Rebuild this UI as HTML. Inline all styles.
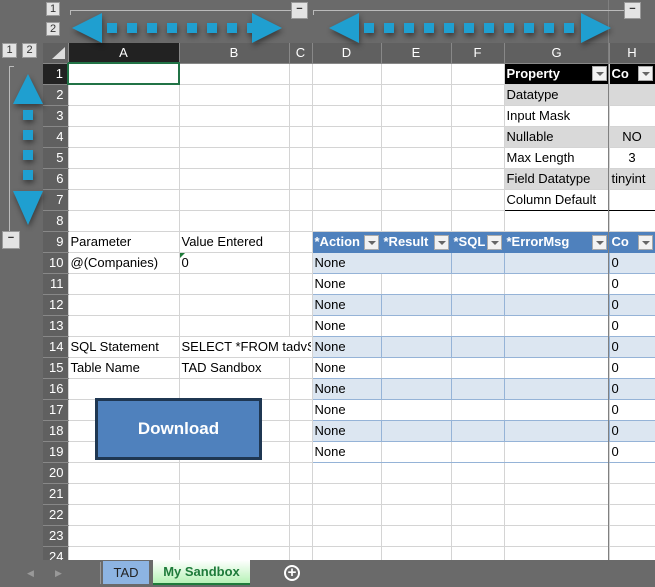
<!DOCTYPE html>
<html><head><meta charset="utf-8"><style>
*{margin:0;padding:0;box-sizing:border-box}
body{width:655px;height:587px;overflow:hidden;background:#6a6a6a;font-family:"Liberation Sans",Arial,sans-serif;position:relative}
.a{position:absolute}
table{position:absolute;left:43px;top:43px;width:612px;border-collapse:collapse;table-layout:fixed;font-size:13px}
td{height:21px;border:1px solid #d4d4d4;background:#fff;white-space:nowrap;overflow:hidden;padding:0 2px;color:#000;position:relative}
td.ov{overflow:visible;z-index:1}
tr.h td{height:20px;background:#606060;color:#fff;text-align:center;border:none;border-right:1px solid #888;border-bottom:1px solid #888}
td.rh{background:#606060;color:#fff;text-align:right;padding-right:4px;border:none;border-bottom:1px solid #888}
.g{background:#d9d9d9!important}
.k{background:#000!important;color:#fff!important;font-weight:bold}
.bh{background:#4f81bd!important;color:#fff!important;font-weight:bold;border-color:#4f81bd!important}
.bl{background:#dce6f1!important;border-color:#95b3d7!important}
.bw{border-top-color:#95b3d7!important;border-bottom-color:#95b3d7!important}
.f{position:absolute;right:2px;top:3px;width:15px;height:15px;background:#f2f2f2;border:1px solid #aaa}
.f:after{content:"";position:absolute;left:3px;top:5px;border-left:4px solid transparent;border-right:4px solid transparent;border-top:4px solid #666}
.btn{background:#e3e3e3;border:1px solid #999;color:#333;font-size:11px;text-align:center;line-height:12px}
.sq{position:absolute;width:10px;height:10px;background:#1f9fd0}
</style></head><body>
<table>
<colgroup><col style="width:25px"><col style="width:111px"><col style="width:110px"><col style="width:23px"><col style="width:69px"><col style="width:70px"><col style="width:53px"><col style="width:105px"><col style="width:46px"></colgroup>
<tr class="h"><td style="background:#606060"></td><td style="background:#222">A</td><td>B</td><td>C</td><td>D</td><td>E</td><td>F</td><td>G</td><td>H</td></tr>
<tr><td class="rh" style="background:#222">1</td><td style="border:2px solid #217346"></td><td></td><td></td><td></td><td></td><td></td><td class="k">Property<span class="f" style="top:2px"></span></td><td class="k">Co<span class="f" style="top:2px"></span></td></tr>
<tr><td class="rh">2</td><td></td><td></td><td></td><td></td><td></td><td></td><td class="g" style="border-left:1px solid #000">Datatype</td><td class="g"></td></tr>
<tr><td class="rh">3</td><td></td><td></td><td></td><td></td><td></td><td></td><td style="border-left:1px solid #000">Input Mask</td><td></td></tr>
<tr><td class="rh">4</td><td></td><td></td><td></td><td></td><td></td><td></td><td class="g" style="border-left:1px solid #000">Nullable</td><td class="g" style="text-align:center">NO</td></tr>
<tr><td class="rh">5</td><td></td><td></td><td></td><td></td><td></td><td></td><td style="border-left:1px solid #000">Max Length</td><td style="text-align:center">3</td></tr>
<tr><td class="rh">6</td><td></td><td></td><td></td><td></td><td></td><td></td><td class="g" style="border-left:1px solid #000">Field Datatype</td><td class="g">tinyint</td></tr>
<tr><td class="rh">7</td><td></td><td></td><td></td><td></td><td></td><td></td><td style="border-left:1px solid #000;border-bottom:1px solid #000">Column Default</td><td style="border-bottom:1px solid #000"></td></tr>
<tr><td class="rh">8</td><td></td><td></td><td></td><td></td><td></td><td></td><td></td><td></td></tr>
<tr><td class="rh">9</td><td>Parameter</td><td>Value Entered</td><td></td><td class="bh">*Action<span class="f"></span></td><td class="bh">*Result<span class="f"></span></td><td class="bh">*SQL<span class="f"></span></td><td class="bh">*ErrorMsg<span class="f"></span></td><td class="bh">Co<span class="f"></span></td></tr>
<tr><td class="rh">10</td><td>@(Companies)</td><td>0<span class="a" style="left:0;top:0;border-top:5px solid #1e7b3a;border-right:5px solid transparent"></span></td><td></td><td class="bl" style="border-right-color:#dce6f1!important">None</td><td class="bl"></td><td class="bl"></td><td class="bl"></td><td class="bl">0</td></tr>
<tr><td class="rh">11</td><td></td><td></td><td></td><td class="bw">None</td><td class="bw"></td><td class="bw"></td><td class="bw"></td><td class="bw">0</td></tr>
<tr><td class="rh">12</td><td></td><td></td><td></td><td class="bl">None</td><td class="bl"></td><td class="bl"></td><td class="bl"></td><td class="bl">0</td></tr>
<tr><td class="rh">13</td><td></td><td></td><td></td><td class="bw">None</td><td class="bw"></td><td class="bw"></td><td class="bw"></td><td class="bw">0</td></tr>
<tr><td class="rh">14</td><td>SQL Statement</td><td class="ov" style="border-right-color:#fff"><span style="display:block;width:129px;overflow:hidden">SELECT *FROM tadvSa</span></td><td style="border-left-color:#fff"></td><td class="bl">None</td><td class="bl"></td><td class="bl"></td><td class="bl"></td><td class="bl">0</td></tr>
<tr><td class="rh">15</td><td>Table Name</td><td>TAD Sandbox</td><td></td><td class="bw">None</td><td class="bw"></td><td class="bw"></td><td class="bw"></td><td class="bw">0</td></tr>
<tr><td class="rh">16</td><td></td><td></td><td></td><td class="bl">None</td><td class="bl"></td><td class="bl"></td><td class="bl"></td><td class="bl">0</td></tr>
<tr><td class="rh">17</td><td></td><td></td><td></td><td class="bw">None</td><td class="bw"></td><td class="bw"></td><td class="bw"></td><td class="bw">0</td></tr>
<tr><td class="rh">18</td><td></td><td></td><td></td><td class="bl">None</td><td class="bl"></td><td class="bl"></td><td class="bl"></td><td class="bl">0</td></tr>
<tr><td class="rh">19</td><td></td><td></td><td></td><td class="bw">None</td><td class="bw"></td><td class="bw"></td><td class="bw"></td><td class="bw">0</td></tr>
<tr><td class="rh">20</td><td></td><td></td><td></td><td></td><td></td><td></td><td></td><td></td></tr>
<tr><td class="rh">21</td><td></td><td></td><td></td><td></td><td></td><td></td><td></td><td></td></tr>
<tr><td class="rh">22</td><td></td><td></td><td></td><td></td><td></td><td></td><td></td><td></td></tr>
<tr><td class="rh">23</td><td></td><td></td><td></td><td></td><td></td><td></td><td></td><td></td></tr>
<tr><td class="rh">24</td><td></td><td></td><td></td><td></td><td></td><td></td><td></td><td></td></tr>
</table>
<div class="a" style="left:52px;top:47px;border-left:13px solid transparent;border-bottom:12px solid #ddd"></div>
<div class="a" style="left:608px;top:0;width:1px;height:560px;background:#808080"></div>
<div class="a" style="left:70px;top:10px;width:222px;height:1px;background:#bbb"></div>
<div class="a" style="left:70px;top:10px;width:1px;height:5px;background:#bbb"></div>
<div class="a" style="left:313px;top:10px;width:312px;height:1px;background:#bbb"></div>
<div class="a" style="left:313px;top:10px;width:1px;height:5px;background:#bbb"></div>
<div class="a" style="left:9px;top:66px;width:1px;height:166px;background:#bbb"></div>
<div class="a" style="left:9px;top:66px;width:5px;height:1px;background:#bbb"></div>
<div class="a btn" style="left:46px;top:2px;width:14px;height:14px">1</div>
<div class="a btn" style="left:46px;top:22px;width:14px;height:14px">2</div>
<div class="a btn" style="left:2px;top:43px;width:15px;height:15px">1</div>
<div class="a btn" style="left:22px;top:43px;width:15px;height:15px">2</div>
<div class="a btn" style="left:291px;top:2px;width:17px;height:17px;font-weight:bold">−</div>
<div class="a btn" style="left:624px;top:2px;width:17px;height:17px;font-weight:bold">−</div>
<div class="a btn" style="left:2px;top:231px;width:18px;height:18px;font-weight:bold">−</div>
<div style="filter:drop-shadow(1px 3px 3px rgba(0,0,0,.45))">
<div class="a" style="left:72px;top:13px;border-top:15px solid transparent;border-bottom:15px solid transparent;border-right:30px solid #1f9fd0"></div>
<div class="sq" style="left:107px;top:23px"></div><div class="sq" style="left:127px;top:23px"></div><div class="sq" style="left:147px;top:23px"></div><div class="sq" style="left:167px;top:23px"></div><div class="sq" style="left:187px;top:23px"></div><div class="sq" style="left:207px;top:23px"></div><div class="sq" style="left:227px;top:23px"></div><div class="sq" style="left:247px;top:23px"></div>
<div class="a" style="left:252px;top:13px;border-top:15px solid transparent;border-bottom:15px solid transparent;border-left:30px solid #1f9fd0"></div>
<div class="a" style="left:329px;top:13px;border-top:15px solid transparent;border-bottom:15px solid transparent;border-right:30px solid #1f9fd0"></div>
<div class="sq" style="left:364px;top:23px"></div><div class="sq" style="left:384px;top:23px"></div><div class="sq" style="left:404px;top:23px"></div><div class="sq" style="left:424px;top:23px"></div><div class="sq" style="left:444px;top:23px"></div><div class="sq" style="left:464px;top:23px"></div><div class="sq" style="left:484px;top:23px"></div><div class="sq" style="left:504px;top:23px"></div><div class="sq" style="left:524px;top:23px"></div><div class="sq" style="left:544px;top:23px"></div><div class="sq" style="left:564px;top:23px"></div>
<div class="a" style="left:581px;top:13px;border-top:15px solid transparent;border-bottom:15px solid transparent;border-left:30px solid #1f9fd0"></div>
<div class="a" style="left:13px;top:74px;border-left:15px solid transparent;border-right:15px solid transparent;border-bottom:30px solid #1f9fd0"></div>
<div class="sq" style="left:23px;top:110px"></div><div class="sq" style="left:23px;top:130px"></div><div class="sq" style="left:23px;top:150px"></div><div class="sq" style="left:23px;top:170px"></div>
<div class="a" style="left:13px;top:191px;border-left:15px solid transparent;border-right:15px solid transparent;border-top:34px solid #1f9fd0"></div>
</div>
<div class="a" style="left:95px;top:398px;width:167px;height:62px;background:#4f81bd;border:3px solid #1f3752;color:#fff;font-weight:bold;font-size:17px;text-align:center;line-height:56px">Download</div>
<div class="a" style="left:0;top:560px;width:655px;height:27px;background:#6a6a6a"></div>
<div class="a" style="left:27px;top:568px;color:#999;font-size:9px">◀</div>
<div class="a" style="left:55px;top:568px;color:#999;font-size:9px">▶</div>
<div class="a" style="left:100px;top:562px;width:1px;height:22px;background:#999"></div>
<div class="a" style="left:103px;top:561px;width:46px;height:23px;background:#8db4e2;color:#222;font-size:13px;text-align:center;line-height:23px">TAD</div>
<div class="a" style="left:153px;top:560px;width:97px;height:25px;background:linear-gradient(#fff,#b6f2b6);border-bottom:2px solid #1e7b3a;color:#1e7b3a;font-weight:bold;font-size:13px;text-align:center;line-height:24px">My Sandbox</div>
<div class="a" style="left:284px;top:565px;width:16px;height:16px;border:2px solid #fff;border-radius:50%;color:#fff;font-size:15px;line-height:11px;text-align:center;font-weight:bold">+</div>
</body></html>
